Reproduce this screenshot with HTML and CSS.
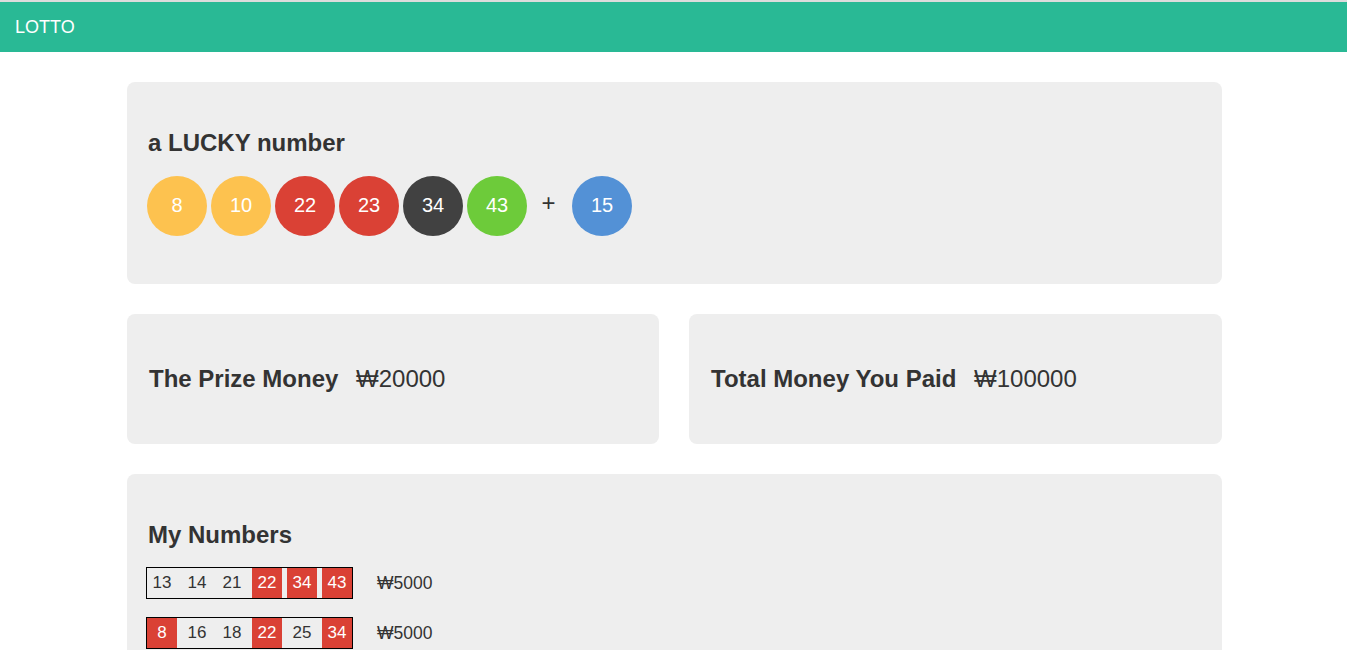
FILE: index.html
```html
<!DOCTYPE html>
<html lang="en">
<head>
    <meta charset="UTF-8">
    <meta name="viewport" content="width=device-width, initial-scale=1.0">
    <title>Lotto</title>
    <link rel="stylesheet" href="styles.css">
</head>
<body>

<header class="top-bar">
    <span class="brand">LOTTO</span>
</header>

<div class="lotto-container">
    <section class="card lucky-card">
        <h2>a LUCKY number</h2>
        <div class="ball-row">
            <span class="ball ball-yellow">8</span>
            <span class="ball ball-yellow">10</span>
            <span class="ball ball-red">22</span>
            <span class="ball ball-red">23</span>
            <span class="ball ball-dark">34</span>
            <span class="ball ball-green">43</span>
            <span class="plus">+</span>
            <span class="ball ball-blue">15</span>
        </div>
    </section>

    <div class="money-row">
        <section class="card money-card">
            <h2>The Prize Money <span class="amount">₩20000</span></h2>
        </section>
        <section class="card money-card">
            <h2>Total Money You Paid <span class="amount">₩100000</span></h2>
        </section>
    </div>

    <section class="card numbers-card">
        <h2>My Numbers</h2>
        <div class="ticket-row">
            <div class="ticket">
                <span class="cell">13</span>
                <span class="cell">14</span>
                <span class="cell">21</span>
                <span class="cell hit">22</span>
                <span class="cell hit">34</span>
                <span class="cell hit">43</span>
            </div>
            <span class="ticket-prize">₩5000</span>
        </div>
        <div class="ticket-row">
            <div class="ticket">
                <span class="cell hit">8</span>
                <span class="cell">16</span>
                <span class="cell">18</span>
                <span class="cell hit">22</span>
                <span class="cell">25</span>
                <span class="cell hit">34</span>
            </div>
            <span class="ticket-prize">₩5000</span>
        </div>
        <div class="ticket-row">
            <div class="ticket">
                <span class="cell">3</span>
                <span class="cell">11</span>
                <span class="cell hit">22</span>
                <span class="cell">29</span>
                <span class="cell hit">34</span>
                <span class="cell">40</span>
            </div>
            <span class="ticket-prize">₩0</span>
        </div>
    </section>
</div>

</body>
</html>
```

FILE: styles.css
```css
/* Global Styles */
html {
    overflow-y: hidden;
}

body {
    font-family: 'Liberation Sans', Arial, sans-serif;
    color: #333;
    background: white;
    margin: 0;
    padding: 0;
}

.top-bar {
    border-top: 2px solid #dcdcdc;
    background: #29b995;
    height: 50px;
    line-height: 50px;
    padding: 0 15px;
}

.brand {
    color: white;
    font-size: 18px;
}

.lotto-container {
    width: 1095px;
    margin: 30px 0 30px 127px;
}

.card {
    background: #eeeeee;
    border-radius: 8px;
    padding: 28px 20px;
}

.card h2 {
    font-size: 24px;
    font-weight: bold;
    margin: 0;
}

/* Lucky numbers */
.lucky-card h2 {
    margin: 19px 0 19px 1px;
}

.ball-row {
    display: flex;
    align-items: center;
    gap: 4px;
    margin-bottom: 20px;
}

.ball {
    width: 60px;
    height: 60px;
    border-radius: 50%;
    color: white;
    font-size: 20px;
    display: flex;
    justify-content: center;
    align-items: center;
    padding-bottom: 1px;
    box-sizing: border-box;
}

.ball-yellow { background: #fdc24f; }
.ball-red { background: #da4135; }
.ball-dark { background: #414141; }
.ball-green { background: #6dcb3a; }
.ball-blue { background: #5391d6; }

.plus {
    font-size: 24px;
    width: 35px;
    text-align: center;
    margin: 0 2px 6px 0;
}

/* Money cards */
.money-row {
    display: grid;
    grid-template-columns: 532px 1fr;
    gap: 30px;
    margin: 30px 0;
}

.money-card h2 {
    margin: 23px 0 23px 2px;
}

.amount {
    font-weight: normal;
    margin-left: 11px;
}

/* My numbers */
.numbers-card h2 {
    margin: 19px 0 18px 1px;
}

.ticket-row {
    display: flex;
    align-items: center;
    gap: 24px;
    margin-bottom: 18px;
}

.ticket {
    display: flex;
    gap: 5px;
    border: 1px solid #000;
    margin-left: -1px;
}

.cell {
    width: 30px;
    height: 30px;
    line-height: 30px;
    text-align: center;
    font-size: 17px;
}

.cell.hit {
    background: #da4135;
    color: white;
}

.ticket-prize {
    font-size: 17.5px;
}
```
